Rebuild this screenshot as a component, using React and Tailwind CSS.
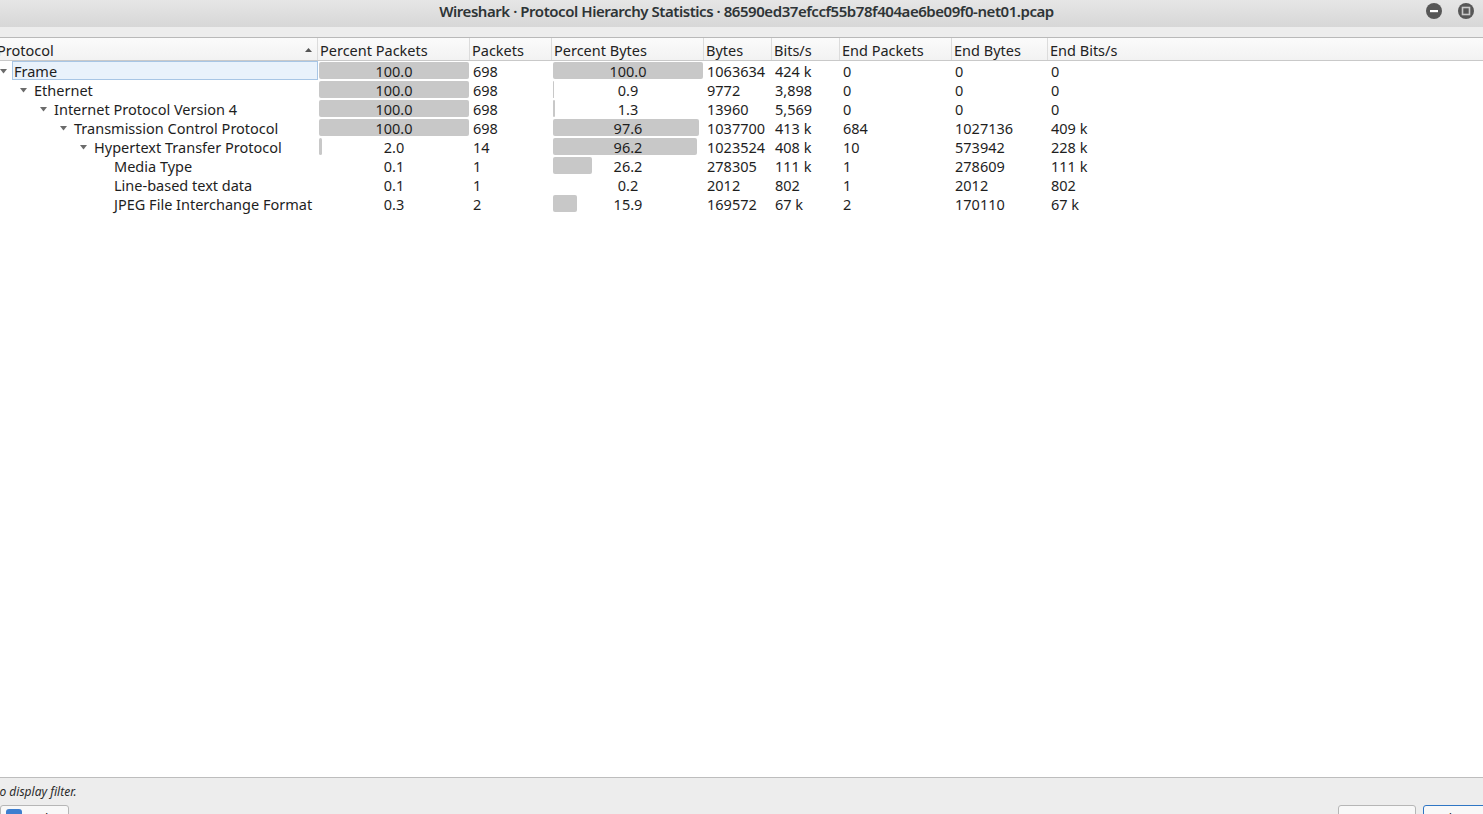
import React from 'react';

const rows = [
  { name: 'Frame', depth: 0, open: true, pp: '100.0', pkts: '698', pb: '100.0', bytes: '1063634', bits: '424 k', ep: '0', eb: '0', ebits: '0' },
  { name: 'Ethernet', depth: 1, open: true, pp: '100.0', pkts: '698', pb: '0.9', bytes: '9772', bits: '3,898', ep: '0', eb: '0', ebits: '0' },
  { name: 'Internet Protocol Version 4', depth: 2, open: true, pp: '100.0', pkts: '698', pb: '1.3', bytes: '13960', bits: '5,569', ep: '0', eb: '0', ebits: '0' },
  { name: 'Transmission Control Protocol', depth: 3, open: true, pp: '100.0', pkts: '698', pb: '97.6', bytes: '1037700', bits: '413 k', ep: '684', eb: '1027136', ebits: '409 k' },
  { name: 'Hypertext Transfer Protocol', depth: 4, open: true, pp: '2.0', pkts: '14', pb: '96.2', bytes: '1023524', bits: '408 k', ep: '10', eb: '573942', ebits: '228 k' },
  { name: 'Media Type', depth: 5, pp: '0.1', pkts: '1', pb: '26.2', bytes: '278305', bits: '111 k', ep: '1', eb: '278609', ebits: '111 k' },
  { name: 'Line-based text data', depth: 5, pp: '0.1', pkts: '1', pb: '0.2', bytes: '2012', bits: '802', ep: '1', eb: '2012', ebits: '802' },
  { name: 'JPEG File Interchange Format', depth: 5, pp: '0.3', pkts: '2', pb: '15.9', bytes: '169572', bits: '67 k', ep: '2', eb: '170110', ebits: '67 k' },
];

// indentation for each tree level, in pixels
const indents = ['pl-[6px]', 'pl-[26px]', 'pl-[46px]', 'pl-[66px]', 'pl-[86px]', 'pl-[106px]'];

function Caret() {
  return (
    <svg width="7" height="5" viewBox="0 0 7 5" className="shrink-0">
      <path d="M0 0 L7 0 L3.5 4.5 Z" fill="#6b6b6b" />
    </svg>
  );
}

function PercentBar({ value }) {
  const w = Math.round((parseFloat(value) / 100) * 150);
  return (
    <div className="relative w-[152px] h-[19px] shrink-0">
      {w > 0 && (
        <div className="absolute left-[1px] top-[1px] h-[17px] bg-[#c8c8c8] rounded-[2px]" style={{ width: w }} />
      )}
      <div className="relative h-full pt-[2px] flex items-center justify-center">{value}</div>
    </div>
  );
}

function Cell({ w, children }) {
  return <div className={`${w} h-full pt-[2px] pl-[3px] flex items-center shrink-0 whitespace-nowrap`}>{children}</div>;
}

function HeaderCell({ label, w, last }) {
  return (
    <div className={`${w} h-full flex items-center pl-[2px] pt-[4px] shrink-0 whitespace-nowrap ${last ? '' : 'border-r border-[#dcdcdc]'}`}>
      {label}
    </div>
  );
}

export default function App() {
  return (
    <div className="h-[814px] w-[1483px] overflow-hidden bg-white flex flex-col text-[#1e1e1e]" style={{ fontFamily: '"Noto Sans", sans-serif' }}>
      {/* title bar */}
      <div className="h-[27px] shrink-0 bg-gradient-to-b from-[#e6e6e6] to-[#d7d7d7] flex items-start relative">
        <div className="flex-1 text-center text-[15px] leading-[22px] font-semibold tracking-[-0.45px] text-[#2e3436] translate-x-[5px]">
          Wireshark · Protocol Hierarchy Statistics · 86590ed37efccf55b78f404ae6be09f0-net01.pcap
        </div>
        <div className="absolute right-[9px] top-[3px] flex gap-[16px]">
          <svg width="16" height="16" viewBox="0 0 16 16">
            <circle cx="8" cy="8" r="8" fill="#575757" />
            <rect x="4" y="7" width="8" height="2.2" fill="#ffffff" />
          </svg>
          <svg width="16" height="16" viewBox="0 0 16 16">
            <circle cx="8" cy="8" r="8" fill="#575757" />
            <rect x="4.5" y="4.5" width="7" height="7" fill="none" stroke="#c9c9c9" strokeWidth="1.6" />
          </svg>
        </div>
      </div>
      <div className="h-[11px] shrink-0 bg-[#ededed] border-b border-[#b9b9b9]" />

      {/* tree table */}
      <div className="flex-1 flex flex-col text-[14.5px] ml-[-6px] overflow-hidden">
        <div className="h-[23px] shrink-0 flex bg-gradient-to-b from-[#fbfbfb] to-[#f2f2f2] border-b border-[#c9c9c9] text-[#222]">
          <div className="w-[324px] h-full flex items-center pl-[3px] pt-[4px] pr-[5px] shrink-0 border-r border-[#dcdcdc]">
            <span className="flex-1">Protocol</span>
            <svg width="7" height="4" viewBox="0 0 7 4" className="mb-[3px]">
              <path d="M0 4 L7 4 L3.5 0 Z" fill="#555" />
            </svg>
          </div>
          <HeaderCell label="Percent Packets" w="w-[152px]" />
          <HeaderCell label="Packets" w="w-[82px]" />
          <HeaderCell label="Percent Bytes" w="w-[152px]" />
          <HeaderCell label="Bytes" w="w-[68px]" />
          <HeaderCell label="Bits/s" w="w-[68px]" />
          <HeaderCell label="End Packets" w="w-[112px]" />
          <HeaderCell label="End Bytes" w="w-[96px]" />
          <HeaderCell label="End Bits/s" w="w-[80px]" last />
        </div>

        {rows.map((r, i) => (
          <div key={r.name} className="h-[19px] shrink-0 flex items-center">
            <div className={`w-[324px] h-full shrink-0 flex items-center ${indents[r.depth]}`}>
              <div className="w-[12px] pt-[1px] flex items-center">{r.open && <Caret />}</div>
              <div className={`flex-1 h-full flex items-center pl-[1px] pt-[2px] whitespace-nowrap ${i === 0 ? 'bg-[#e9f2fb] border border-[#a8c6e5]' : 'border border-transparent'}`}>
                {r.name}
              </div>
            </div>
            <PercentBar value={r.pp} />
            <Cell w="w-[82px]">{r.pkts}</Cell>
            <PercentBar value={r.pb} />
            <Cell w="w-[68px]">{r.bytes}</Cell>
            <Cell w="w-[68px]">{r.bits}</Cell>
            <Cell w="w-[112px]">{r.ep}</Cell>
            <Cell w="w-[96px]">{r.eb}</Cell>
            <Cell w="w-[80px]">{r.ebits}</Cell>
          </div>
        ))}
      </div>

      {/* status and buttons */}
      <div className="h-[37px] shrink-0 bg-[#ededed] border-t border-[#bdbdbd] flex flex-col">
        <div className="h-[27px] shrink-0 flex items-center ml-[-9px] text-[12px] italic text-[#2b2b2b]">No display filter.</div>
        <div className="flex justify-between items-start">
          <div className="w-[69px] h-[28px] bg-[#f8f8f8] border border-[#b6b6b6] rounded-[3px] flex items-start pt-[3px] pl-[5px] gap-[6px] text-[13px]">
            <div className="w-[16px] h-[16px] rounded-[3px] bg-[#3d7ecf]" />
            <span>Help</span>
          </div>
          <div className="flex gap-[7px] mr-[-8px]">
            <div className="w-[78px] h-[28px] bg-[#f8f8f8] border border-[#b6b6b6] rounded-[3px] text-center text-[13px] pt-[3px]">Copy</div>
            <div className="w-[68px] h-[28px] bg-[#f8f8f8] border border-[#2f76c4] rounded-[3px] text-center text-[13px] pt-[3px]">Close</div>
          </div>
        </div>
      </div>
    </div>
  );
}
